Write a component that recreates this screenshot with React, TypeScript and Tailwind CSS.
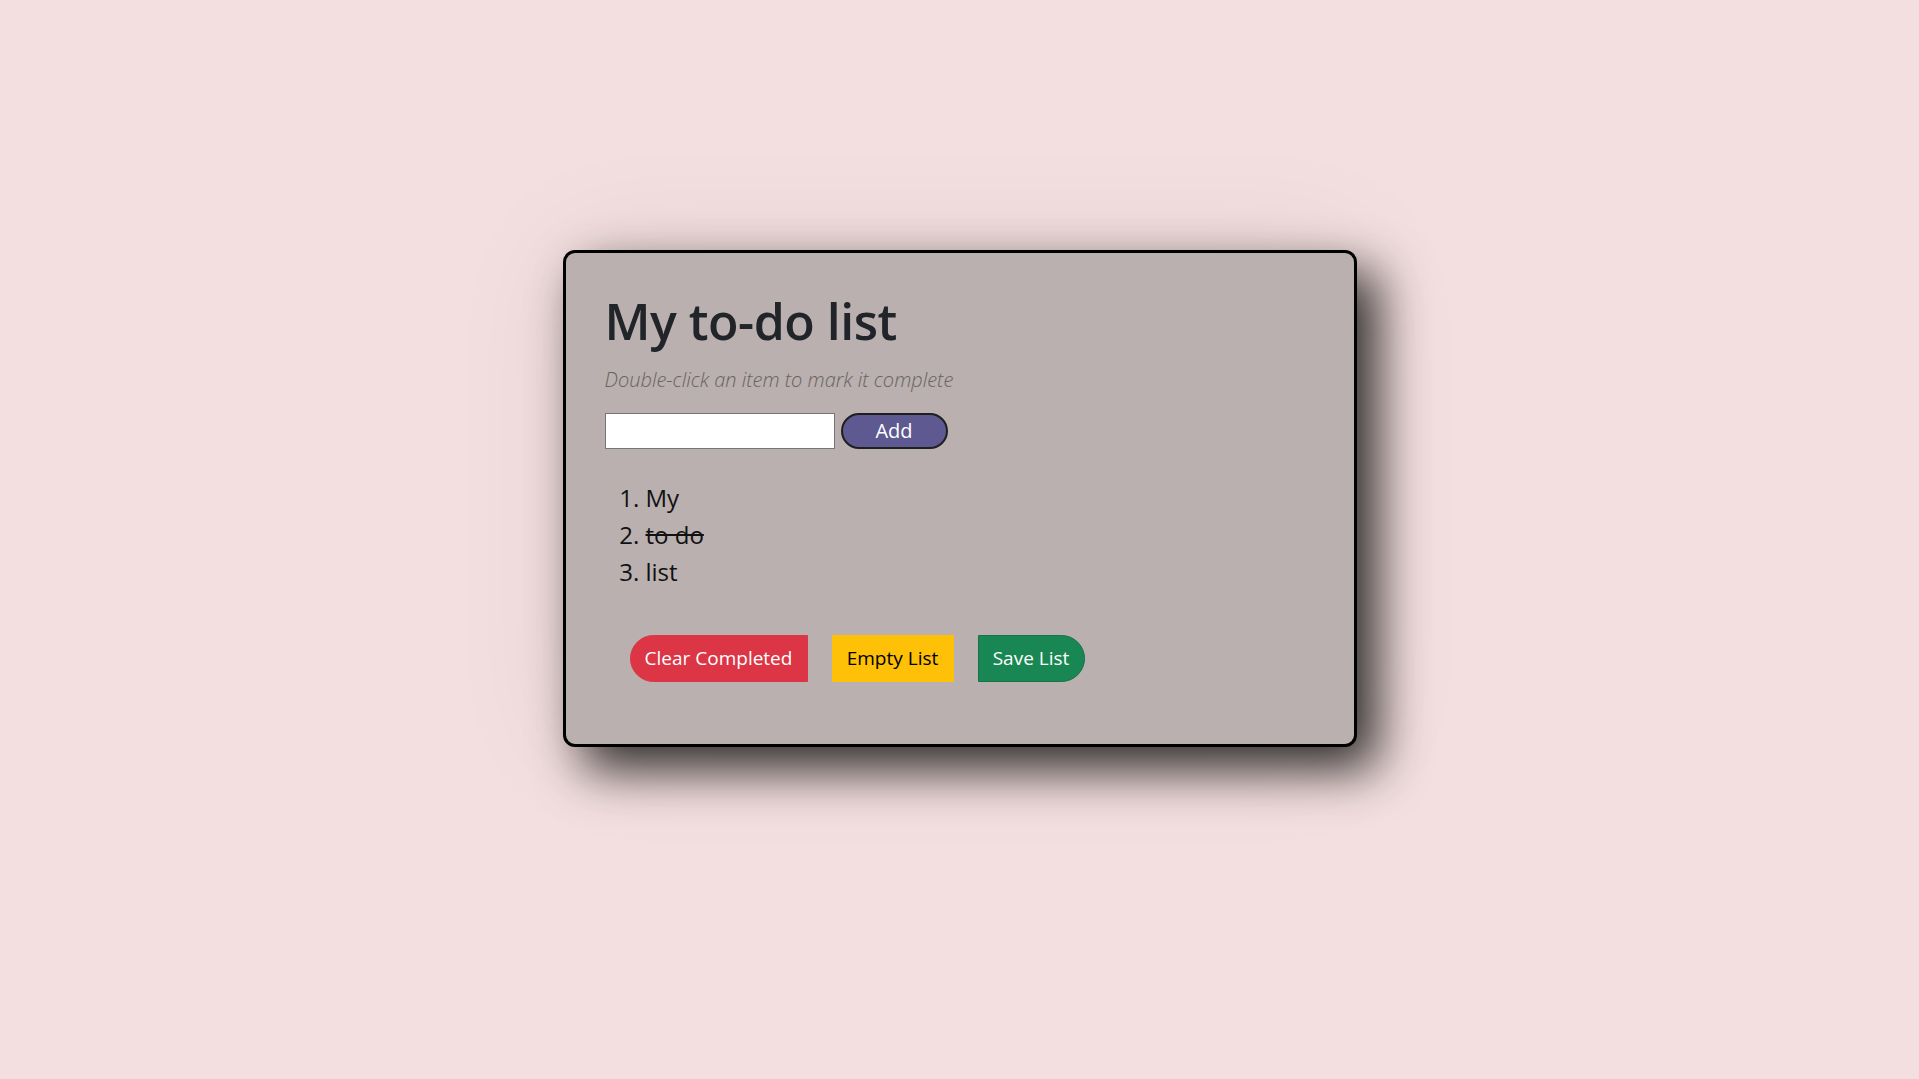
import React, { useState } from 'react';

type Item = { text: string; done: boolean };

const START: Item[] = [
  { text: 'My', done: false },
  { text: 'to do', done: true },
  { text: 'list', done: false },
];

const App: React.FC = () => {
  const [items, setItems] = useState<Item[]>(START);
  const [draft, setDraft] = useState('');

  const addItem = () => {
    if (!draft.trim()) return;
    setItems([...items, { text: draft.trim(), done: false }]);
    setDraft('');
  };

  const toggle = (i: number) =>
    setItems(items.map((it, idx) => (idx === i ? { ...it, done: !it.done } : it)));

  return (
    <div
      className="min-h-screen w-full bg-[#f3dfdf] flex justify-center pt-[250px]"
      style={{ fontFamily: '"Open Sans", "Noto Sans", sans-serif' }}
    >
      <div className="w-[794px] h-[497px] bg-[#b9b0af] border-[3px] border-black rounded-[12px] shadow-[20px_22px_50px_rgba(0,0,0,0.8),0_0_120px_rgba(0,0,0,0.08)] px-[39px] pt-[38px]">
        <h1 className="text-[50px] leading-[1.2] font-semibold text-[#212529] tracking-[-0.5px]">My to-do list</h1>
        <p className="mt-[14px] text-[20px] italic font-light text-[#6a6363]">Double-click an item to mark it complete</p>

        <div className="mt-[18px] flex items-center gap-[6px]">
          <input
            value={draft}
            onChange={(e) => setDraft(e.target.value)}
            onKeyDown={(e) => e.key === 'Enter' && addItem()}
            className="w-[230px] h-[36px] bg-white border border-[#767676] px-2 text-[18px] outline-none"
          />
          <button
            onClick={addItem}
            className="w-[107px] h-[36px] rounded-full bg-[#5e5991] border-2 border-[#1f1f1f] text-white text-[20px] leading-none"
          >
            Add
          </button>
        </div>

        <ol className="mt-[30px] list-decimal pl-[41px] text-[24px] leading-[37px] text-[#111]">
          {items.map((it, i) => (
            <li key={i} onDoubleClick={() => toggle(i)} className={it.done ? 'line-through' : ''}>
              {it.text}
            </li>
          ))}
        </ol>

        <div className="mt-[45px] ml-[25px] flex items-center gap-[24px] text-[19px]">
          <button
            onClick={() => setItems(items.filter((it) => !it.done))}
            className="w-[178px] h-[47px] bg-[#dc3545] text-white rounded-l-full border border-[#dc3545]"
          >
            Clear Completed
          </button>
          <button
            onClick={() => setItems([])}
            className="w-[122px] h-[47px] bg-[#ffc107] text-black border border-[#ffc107]"
          >
            Empty List
          </button>
          <button className="w-[107px] h-[47px] bg-[#198754] text-white rounded-r-full border border-[#157347]">
            Save List
          </button>
        </div>
      </div>
    </div>
  );
};

export default App;
